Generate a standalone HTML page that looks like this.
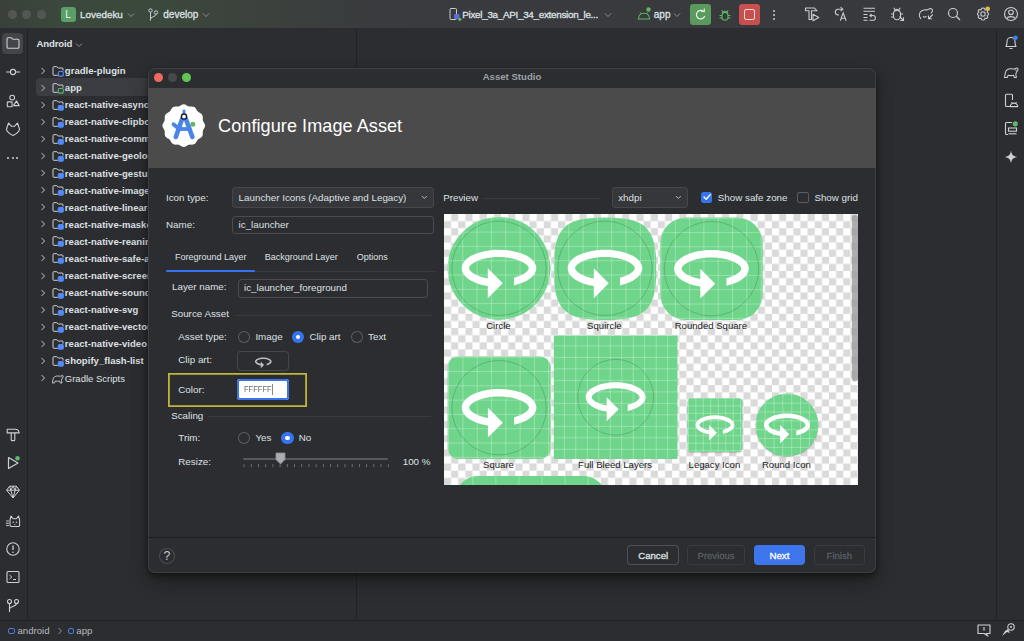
<!DOCTYPE html>
<html><head><meta charset="utf-8">
<style>
*{box-sizing:border-box;margin:0;padding:0}
html,body{width:1024px;height:641px;overflow:hidden;background:#2b2d30;font-family:"Liberation Sans",sans-serif;color:#dfe1e5;position:relative}
.a{position:absolute}
.t{position:absolute;white-space:nowrap;line-height:1}
svg{overflow:visible}
</style></head><body>
<div class="a" style="left:0.00px;top:0.00px;width:1024.00px;height:28.00px;background:linear-gradient(90deg,#394039 0px,#3b493c 70px,#3b483c 170px,#3c423d 240px,#393b3e 380px,#37393c 1024px)"></div>
<div class="a" style="left:0.00px;top:27.60px;width:1024.00px;height:1.00px;background:#2a2b2e"></div>
<div class="a" style="left:8.00px;top:9.80px;width:9.00px;height:9.00px;border-radius:50%;background:#535754"></div>
<div class="a" style="left:22.30px;top:9.80px;width:9.00px;height:9.00px;border-radius:50%;background:#535754"></div>
<div class="a" style="left:36.80px;top:9.80px;width:9.00px;height:9.00px;border-radius:50%;background:#535754"></div>
<div class="a" style="left:61.30px;top:6.80px;width:14.50px;height:15.00px;border-radius:3px;background:#5a9e68"></div>
<div class="t" style="left:65.20px;top:9.84px;font-size:10px;font-weight:normal;color:#f0f5f0;">L</div>
<div class="t" style="left:80.00px;top:10.12px;font-size:9.9px;font-weight:normal;color:#dfe1e5;-webkit-text-stroke:0.3px #dfe1e5">Lovedeku</div>
<svg class="a" style="left:126.50px;top:11.50px" width="8" height="6" viewBox="0 0 8 6"><path d="M1 1.5 L4 4.5 L7 1.5" fill="none" stroke="#8c8f94" stroke-width="1"/></svg>
<svg class="a" style="left:147.00px;top:8.00px" width="12" height="13" viewBox="0 0 12 13"><circle cx="3.5" cy="2.5" r="1.7" fill="none" stroke="#c9ccd1" stroke-width="1"/><circle cx="9" cy="4.5" r="1.7" fill="none" stroke="#c9ccd1" stroke-width="1"/><path d="M3.5 4.2 V12.5 M9 6.2 C9 9 3.5 8.5 3.5 11" fill="none" stroke="#c9ccd1" stroke-width="1"/></svg>
<div class="t" style="left:163.30px;top:10.04px;font-size:10px;font-weight:normal;color:#dfe1e5;-webkit-text-stroke:0.3px #dfe1e5">develop</div>
<svg class="a" style="left:202.00px;top:11.50px" width="8" height="6" viewBox="0 0 8 6"><path d="M1 1.5 L4 4.5 L7 1.5" fill="none" stroke="#8c8f94" stroke-width="1"/></svg>
<svg class="a" style="left:449.00px;top:8.00px" width="14" height="14" viewBox="0 0 14 14"><rect x="1" y="0.5" width="6.5" height="11" rx="1" fill="none" stroke="#c9ccd1" stroke-width="1"/><rect x="5" y="6" width="5.5" height="5" rx="1" fill="#5b6fd0"/><circle cx="10.8" cy="11.3" r="1.6" fill="#5fb865"/></svg>
<div class="t" style="left:462.30px;top:10.12px;font-size:9.9px;font-weight:normal;color:#dfe1e5;letter-spacing:-0.3px;-webkit-text-stroke:0.3px #dfe1e5">Pixel_3a_API_34_extension_le...</div>
<svg class="a" style="left:604.00px;top:11.50px" width="8" height="6" viewBox="0 0 8 6"><path d="M1 1.5 L4 4.5 L7 1.5" fill="none" stroke="#8c8f94" stroke-width="1"/></svg>
<svg class="a" style="left:637.00px;top:6.00px" width="14" height="15" viewBox="0 0 14 15"><path d="M1.5 13 C1.5 9.3 4 7.2 7 7.2 C10 7.2 12.5 9.3 12.5 13 Z" fill="none" stroke="#5fb865" stroke-width="1.1"/><path d="M3.2 6.3 L4.5 8 M10.8 6.3 L9.5 8" stroke="#5fb865" stroke-width="1"/><circle cx="11.5" cy="3.5" r="2.2" fill="#5fb865"/></svg>
<div class="t" style="left:653.80px;top:10.04px;font-size:10px;font-weight:normal;color:#dfe1e5;-webkit-text-stroke:0.3px #dfe1e5">app</div>
<svg class="a" style="left:673.00px;top:11.50px" width="8" height="6" viewBox="0 0 8 6"><path d="M1 1.5 L4 4.5 L7 1.5" fill="none" stroke="#8c8f94" stroke-width="1"/></svg>
<div class="a" style="left:690.30px;top:3.80px;width:21.20px;height:21.20px;border-radius:3px;background:#5a9a5c"></div>
<svg class="a" style="left:694.00px;top:8.00px" width="13" height="13" viewBox="0 0 13 13"><path d="M9.8 3.6 A4.3 4.3 0 1 0 10.8 8" fill="none" stroke="#e6f0e6" stroke-width="1.2"/><path d="M6.8 3.3 L10.3 3.6 L10.3 0.6" fill="none" stroke="#e6f0e6" stroke-width="1.1"/></svg>
<svg class="a" style="left:718.00px;top:7.50px" width="14" height="14" viewBox="0 0 14 14"><path d="M4 8 A3 3.6 0 0 1 10 8 V9 A3 3.2 0 0 1 4 9 Z" fill="none" stroke="#5fb865" stroke-width="1.1"/><path d="M4.3 5.3 A2.7 2 0 0 1 9.7 5.3" fill="none" stroke="#5fb865" stroke-width="1.1"/><path d="M5 3.8 L3.8 2 M9 3.8 L10.2 2 M4 7.5 H1.5 M10 7.5 H12.5 M4 10 H1.5 M10 10 H12.5" stroke="#5fb865" stroke-width="1"/></svg>
<div class="a" style="left:739.00px;top:3.80px;width:21.20px;height:21.20px;border-radius:3px;background:#c94f4f"></div>
<div class="a" style="left:744.20px;top:9.00px;width:10.80px;height:10.80px;border-radius:2px;border:1.2px solid #f5dede"></div>
<div class="a" style="left:772.50px;top:9.60px;width:2.00px;height:2.00px;border-radius:50%;background:#c9ccd1"></div>
<div class="a" style="left:772.50px;top:13.60px;width:2.00px;height:2.00px;border-radius:50%;background:#c9ccd1"></div>
<div class="a" style="left:772.50px;top:17.60px;width:2.00px;height:2.00px;border-radius:50%;background:#c9ccd1"></div>
<svg class="a" style="left:803.80px;top:6.30px" width="16" height="16" viewBox="0 0 16 16"><path d="M1.5 2 H10.5 L13 4.8 H7.5 V13.5 H5 V4.8 H1.5 Z" fill="none" stroke="#c9ccd1" stroke-width="1.1" stroke-linejoin="round"/><path d="M9 8.3 L14.8 11.5 L9 14.7 Z" fill="#37393c" stroke="#c9ccd1" stroke-width="1.1" stroke-linejoin="round"/></svg>
<svg class="a" style="left:832.50px;top:6.30px" width="16" height="16" viewBox="0 0 16 16"><path d="M9.5 3.2 H5.2 A2.9 2.9 0 0 0 5.2 9 H6" fill="none" stroke="#c9ccd1" stroke-width="1.1"/><path d="M7.6 1.2 L9.8 3.2 L7.6 5.2" fill="none" stroke="#c9ccd1" stroke-width="1.1"/><path d="M7.3 14.8 L10.2 6.8 L13.1 14.8 M8.3 12.2 H12.1" fill="none" stroke="#c9ccd1" stroke-width="1.1"/></svg>
<svg class="a" style="left:860.50px;top:6.30px" width="16" height="16" viewBox="0 0 16 16"><path d="M2.5 2.3 H14 M2.5 5.2 H14 M2.5 8.5 H6.5 M2.5 11.5 H6.5 M2.5 14.3 H6.5" fill="none" stroke="#c9ccd1" stroke-width="1.1"/><path d="M10.5 8 L9 9.5 L10.5 11 M9.2 9.5 H12 A2.4 2.4 0 0 1 12 14.3 H8.5" fill="none" stroke="#c9ccd1" stroke-width="1.1"/></svg>
<svg class="a" style="left:888.80px;top:6.30px" width="16" height="16" viewBox="0 0 16 16"><path d="M4.5 7.5 A3.5 3 0 0 1 11.5 7.5 V10 A3.5 3.8 0 0 1 4.5 10 Z M5.5 5.5 A2.5 2.3 0 0 1 10.5 5.5" fill="none" stroke="#c9ccd1" stroke-width="1.1"/><path d="M5.8 3.5 L4.8 1.8 M10.2 3.5 L11.2 1.8 M4.5 8 H2 M4.5 11 H2 M11.5 8 H14" stroke="#c9ccd1" stroke-width="1.1"/><path d="M10.5 10.5 L14.5 14.5 M14.5 11.3 V14.5 H11.3" fill="none" stroke="#c9ccd1" stroke-width="1.1"/></svg>
<svg class="a" style="left:917.50px;top:6.30px" width="16" height="16" viewBox="0 0 16 16"><path d="M1.5 10.5 C0.8 7.5 2.5 4.5 6 4 C8.5 3.7 9.5 4.3 10.8 3.2 C12 2.2 14.5 2.5 14.5 4.6 C14.5 6 13.3 6.8 12.8 7.2 M1.5 10.5 L3 13 M5 10.5 C6 11 7.5 11 8.5 10.5" fill="none" stroke="#c9ccd1" stroke-width="1.1" stroke-linejoin="round"/><path d="M14.8 8.5 L10.5 12.8 M10.5 9.5 V12.8 H13.8" fill="none" stroke="#c9ccd1" stroke-width="1.1"/></svg>
<svg class="a" style="left:946.30px;top:6.30px" width="16" height="16" viewBox="0 0 16 16"><circle cx="7" cy="7" r="4.5" fill="none" stroke="#c9ccd1" stroke-width="1.2"/><path d="M10.3 10.3 L14 14" stroke="#c9ccd1" stroke-width="1.3"/></svg>
<svg class="a" style="left:974.50px;top:6.30px" width="16" height="16" viewBox="0 0 16 16"><path d="M8 2 L9.5 2.3 L10 4 L11.8 3.5 L12.8 4.7 L12 6.2 L13.5 7.3 L13.5 8.7 L12 9.8 L12.8 11.3 L11.8 12.5 L10 12 L9.5 13.7 L8 14 L6.5 13.7 L6 12 L4.2 12.5 L3.2 11.3 L4 9.8 L2.5 8.7 L2.5 7.3 L4 6.2 L3.2 4.7 L4.2 3.5 L6 4 L6.5 2.3 Z" fill="none" stroke="#c9ccd1" stroke-width="1.05" stroke-linejoin="round"/><circle cx="8" cy="8" r="2.2" fill="none" stroke="#c9ccd1" stroke-width="1.05"/><circle cx="12.7" cy="2.7" r="2.3" fill="#e9b74a"/></svg>
<svg class="a" style="left:1003.00px;top:6.30px" width="16" height="16" viewBox="0 0 16 16"><circle cx="8" cy="8" r="6.5" fill="none" stroke="#c9ccd1" stroke-width="1.1"/><circle cx="8" cy="6.3" r="2.3" fill="none" stroke="#c9ccd1" stroke-width="1.1"/><path d="M3.8 12.6 C5 10 11 10 12.2 12.6" fill="none" stroke="#c9ccd1" stroke-width="1.1"/></svg>
<div class="a" style="left:27.00px;top:28.00px;width:1.00px;height:592.00px;background:#212225"></div>
<div class="a" style="left:356.00px;top:28.00px;width:1.00px;height:592.00px;background:#212225"></div>
<div class="a" style="left:996.00px;top:28.00px;width:1.00px;height:592.00px;background:#212225"></div>
<div class="a" style="left:0.00px;top:620.00px;width:1024.00px;height:1.00px;background:#212225"></div>
<div class="a" style="left:2.20px;top:32.60px;width:21.20px;height:21.60px;border-radius:4px;background:#43454a"></div>
<svg class="a" style="left:4.80px;top:35.40px" width="16" height="16" viewBox="0 0 16 16"><path d="M2 12 V4 A1.3 1.3 0 0 1 3.3 2.7 H6.3 L7.8 4.3 H12.7 A1.3 1.3 0 0 1 14 5.6 V12 A1.3 1.3 0 0 1 12.7 13.3 H3.3 A1.3 1.3 0 0 1 2 12 Z" fill="none" stroke="#ced0d6" stroke-width="1.1"/></svg>
<svg class="a" style="left:4.60px;top:64.00px" width="16" height="16" viewBox="0 0 16 16"><circle cx="8" cy="8" r="2.6" fill="none" stroke="#ced0d6" stroke-width="1.1"/><path d="M1 8 H5.4 M10.6 8 H15" stroke="#ced0d6" stroke-width="1.1"/></svg>
<svg class="a" style="left:4.80px;top:92.70px" width="16" height="16" viewBox="0 0 16 16"><circle cx="7.2" cy="4.6" r="2.4" fill="none" stroke="#ced0d6" stroke-width="1.1"/><rect x="2.3" y="8.9" width="4.8" height="4.8" rx="0.5" fill="none" stroke="#ced0d6" stroke-width="1.1"/><path d="M11.4 7.9 L14.2 12.6 H8.6 Z" fill="none" stroke="#ced0d6" stroke-width="1.1" stroke-linejoin="round"/></svg>
<svg class="a" style="left:4.80px;top:121.20px" width="16" height="16" viewBox="0 0 16 16"><path d="M3.5 2 L6.3 5.2 H9.7 L12.5 2 L14.5 8.2 C14.5 10.5 10.5 13.5 8 14.5 C5.5 13.5 1.5 10.5 1.5 8.2 Z" fill="none" stroke="#ced0d6" stroke-width="1.1" stroke-linejoin="round"/></svg>
<div class="a" style="left:7.30px;top:156.60px;width:2.00px;height:2.00px;border-radius:50%;background:#ced0d6"></div>
<div class="a" style="left:11.80px;top:156.60px;width:2.00px;height:2.00px;border-radius:50%;background:#ced0d6"></div>
<div class="a" style="left:16.30px;top:156.60px;width:2.00px;height:2.00px;border-radius:50%;background:#ced0d6"></div>
<svg class="a" style="left:4.80px;top:425.80px" width="16" height="16" viewBox="0 0 16 16"><path d="M2.2 3.2 H10.5 C12.3 3.2 13.8 4.6 14.2 6.9 H2.2 Z M6.2 6.9 V13.8 A0.8 0.8 0 0 0 7 14.6 H9 A0.8 0.8 0 0 0 9.8 13.8 V6.9" fill="none" stroke="#ced0d6" stroke-width="1.1" stroke-linejoin="round"/></svg>
<svg class="a" style="left:4.80px;top:455.10px" width="16" height="16" viewBox="0 0 16 16"><path d="M3.5 2.5 L13 8 L3.5 13.5 Z" fill="none" stroke="#ced0d6" stroke-width="1.2" stroke-linejoin="round"/><circle cx="12.5" cy="3.3" r="2.3" fill="#5fb865"/></svg>
<svg class="a" style="left:4.80px;top:483.60px" width="16" height="16" viewBox="0 0 16 16"><path d="M1.6 6.2 L4.6 2.2 H11.4 L14.4 6.2 L8 14 Z M1.6 6.2 H14.4 M5.8 6.2 L8 14 L10.2 6.2 M4.6 2.2 L5.8 6.2 L8 2.2 L10.2 6.2 L11.4 2.2" fill="none" stroke="#ced0d6" stroke-width="1" stroke-linejoin="round"/></svg>
<svg class="a" style="left:4.80px;top:512.70px" width="16" height="16" viewBox="0 0 16 16"><path d="M6 3 L8.2 5.8 H11.3 L13.5 3 L14.6 7 V12.2 A1.3 1.3 0 0 1 13.3 13.5 H6.3 A1.3 1.3 0 0 1 5 12.2 V7 Z" fill="none" stroke="#ced0d6" stroke-width="1.05" stroke-linejoin="round"/><path d="M1.2 8 H3.8 M0.8 10.3 H3.8 M1.2 12.6 H3.8" stroke="#ced0d6" stroke-width="1"/><circle cx="8.2" cy="9.2" r="0.75" fill="#ced0d6"/><circle cx="11.4" cy="9.2" r="0.75" fill="#ced0d6"/><path d="M9.2 11.2 L9.8 11.8 L10.4 11.2" fill="none" stroke="#ced0d6" stroke-width="0.8"/></svg>
<svg class="a" style="left:4.80px;top:541.30px" width="16" height="16" viewBox="0 0 16 16"><circle cx="8" cy="8" r="6.2" fill="none" stroke="#ced0d6" stroke-width="1.1"/><path d="M8 4.5 V9" stroke="#ced0d6" stroke-width="1.3"/><circle cx="8" cy="11.2" r="0.8" fill="#ced0d6"/></svg>
<svg class="a" style="left:4.80px;top:568.90px" width="16" height="16" viewBox="0 0 16 16"><rect x="2" y="2.5" width="12" height="11" rx="1" fill="none" stroke="#ced0d6" stroke-width="1.1"/><path d="M4.5 6 L6.8 8 L4.5 10 M8 10.5 H11" fill="none" stroke="#ced0d6" stroke-width="1"/></svg>
<svg class="a" style="left:4.80px;top:598.20px" width="16" height="16" viewBox="0 0 16 16"><circle cx="4.5" cy="3.5" r="2" fill="none" stroke="#ced0d6" stroke-width="1.1"/><circle cx="11.5" cy="3.5" r="2" fill="none" stroke="#ced0d6" stroke-width="1.1"/><path d="M4.5 5.5 V14 M11.5 5.5 C11.5 9 4.5 8 4.5 11" fill="none" stroke="#ced0d6" stroke-width="1.1"/></svg>
<svg class="a" style="left:1003.00px;top:35.00px" width="16" height="16" viewBox="0 0 16 16"><path d="M3 11.5 C4 10 4 8 4 6.5 A4 4 0 0 1 12 6.5 C12 8 12 10 13 11.5 Z M6.5 13.5 H9.5" fill="none" stroke="#ced0d6" stroke-width="1.1" stroke-linejoin="round"/><circle cx="12.5" cy="2.8" r="2.3" fill="#3d7ff0"/></svg>
<svg class="a" style="left:1003.00px;top:64.00px" width="16" height="16" viewBox="0 0 16 16"><path d="M1.5 13.5 L2.3 9 C2.7 6 5.5 4.5 8.5 4.7 C10.5 4.8 11.3 5.5 12.6 4.5 C13.6 3.7 15 3.8 15 5.5 C15 7 13.8 7.5 13.4 8 L12.8 10.5 L13.4 13.5 H11.3 L10.6 11.2 C8.9 11.7 6.6 11.7 5.2 11.2 L4.2 13.5 Z" fill="none" stroke="#ced0d6" stroke-width="1.05" stroke-linejoin="round"/><circle cx="13" cy="6.2" r="0.6" fill="#ced0d6"/></svg>
<svg class="a" style="left:1003.00px;top:92.30px" width="16" height="16" viewBox="0 0 16 16"><path d="M8.5 14.5 H3.5 A1 1 0 0 1 2.5 13.5 V3.3 A1 1 0 0 1 3.5 2.3 H8.5 A1 1 0 0 1 9.5 3.3 V8" fill="none" stroke="#ced0d6" stroke-width="1.1"/><path d="M7.3 14.6 A3.7 3.5 0 0 1 14.7 14.6 Z" fill="none" stroke="#ced0d6" stroke-width="1.1" stroke-linejoin="round"/><path d="M8.5 10 L9.3 11.3 M13.5 10 L12.7 11.3" stroke="#ced0d6" stroke-width="1"/></svg>
<svg class="a" style="left:1003.00px;top:120.40px" width="16" height="16" viewBox="0 0 16 16"><path d="M9 2.5 H3.5 A1 1 0 0 0 2.5 3.5 V13.5 A1 1 0 0 0 3.5 14.5 H5" fill="none" stroke="#ced0d6" stroke-width="1.1"/><rect x="5.5" y="8" width="8" height="3.2" fill="none" stroke="#ced0d6" stroke-width="1.1"/><path d="M5.5 13.8 H13.5" stroke="#ced0d6" stroke-width="1.1"/><circle cx="12.3" cy="3.8" r="2.6" fill="#5fb865"/></svg>
<svg class="a" style="left:1003.00px;top:149.00px" width="16" height="16" viewBox="0 0 16 16"><path d="M8 1.5 C8.6 5.8 10.2 7.4 14.5 8 C10.2 8.6 8.6 10.2 8 14.5 C7.4 10.2 5.8 8.6 1.5 8 C5.8 7.4 7.4 5.8 8 1.5 Z" fill="#ced0d6"/></svg>
<div class="a" style="left:8.20px;top:627.80px;width:6.40px;height:6.20px;border:1.5px solid #4d7fe0;border-radius:2px"></div>
<div class="t" style="left:17.50px;top:626.37px;font-size:9.6px;font-weight:normal;color:#b5b8bd;">android</div>
<svg class="a" style="left:56.50px;top:627.00px" width="6" height="8" viewBox="0 0 6 8"><path d="M1.5 1 L4.5 4 L1.5 7" fill="none" stroke="#8c8f94" stroke-width="1"/></svg>
<div class="a" style="left:67.60px;top:627.80px;width:6.40px;height:6.20px;border:1.5px solid #4d7fe0;border-radius:2px"></div>
<div class="t" style="left:76.30px;top:626.37px;font-size:9.6px;font-weight:normal;color:#b5b8bd;">app</div>
<svg class="a" style="left:976.00px;top:622.00px" width="16" height="16" viewBox="0 0 16 16"><path d="M2 3 H14 V11.5 H10 L12 14 L8 11.5 H2 Z" fill="none" stroke="#ced0d6" stroke-width="1.1" stroke-linejoin="round"/><path d="M8 5 V8.5" stroke="#ced0d6" stroke-width="1.2"/></svg>
<svg class="a" style="left:999.60px;top:622.00px" width="16" height="16" viewBox="0 0 16 16"><path d="M2 14 L5 9 L8 7 L10 11 L7 10 Z" fill="#ced0d6"/><circle cx="11" cy="5" r="3.2" fill="none" stroke="#ced0d6" stroke-width="1.1"/><circle cx="11" cy="5" r="1" fill="#ced0d6"/></svg>
<div class="t" style="left:36.50px;top:39.07px;font-size:9.6px;font-weight:bold;color:#dfe1e5;letter-spacing:-0.15px">Android</div>
<svg class="a" style="left:75.00px;top:42.00px" width="8" height="6" viewBox="0 0 8 6"><path d="M1 1.5 L4 4.5 L7 1.5" fill="none" stroke="#8c8f94" stroke-width="1"/></svg>
<div class="a" style="left:36.30px;top:78.40px;width:320.00px;height:17.20px;border-radius:4px;background:#3b3d42"></div>
<svg class="a" style="left:39.50px;top:66.50px" width="6" height="8" viewBox="0 0 6 8"><path d="M1.5 1 L4.5 4 L1.5 7" fill="none" stroke="#a0a3a8" stroke-width="1.05"/></svg>
<svg class="a" style="left:51.50px;top:64.50px" width="12" height="12" viewBox="0 0 12 12"><path d="M5.8 10.3 H1.8 A0.8 0.8 0 0 1 1 9.5 V2.5 A0.8 0.8 0 0 1 1.8 1.7 H4.8 L6.2 3 H10.2 A0.8 0.8 0 0 1 11 3.8 V5.6" fill="none" stroke="#ced0d6" stroke-width="1"/><rect x="6.3" y="6.5" width="5" height="4.6" rx="1" fill="none" stroke="#548af7" stroke-width="1.1"/></svg>
<div class="t" style="left:64.80px;top:65.96px;font-size:9.5px;font-weight:bold;color:#dfe1e5;letter-spacing:0.05px">gradle-plugin</div>
<svg class="a" style="left:39.50px;top:83.59px" width="6" height="8" viewBox="0 0 6 8"><path d="M1.5 1 L4.5 4 L1.5 7" fill="none" stroke="#a0a3a8" stroke-width="1.05"/></svg>
<svg class="a" style="left:51.50px;top:81.59px" width="12" height="12" viewBox="0 0 12 12"><path d="M5.8 10.3 H1.8 A0.8 0.8 0 0 1 1 9.5 V2.5 A0.8 0.8 0 0 1 1.8 1.7 H4.8 L6.2 3 H10.2 A0.8 0.8 0 0 1 11 3.8 V5.6" fill="none" stroke="#ced0d6" stroke-width="1"/><rect x="6.3" y="6.5" width="5" height="4.6" rx="1" fill="none" stroke="#5fb865" stroke-width="1.1"/></svg>
<div class="t" style="left:64.80px;top:83.05px;font-size:9.5px;font-weight:bold;color:#dfe1e5;letter-spacing:0.05px">app</div>
<svg class="a" style="left:39.50px;top:100.68px" width="6" height="8" viewBox="0 0 6 8"><path d="M1.5 1 L4.5 4 L1.5 7" fill="none" stroke="#a0a3a8" stroke-width="1.05"/></svg>
<svg class="a" style="left:51.50px;top:98.68px" width="12" height="12" viewBox="0 0 12 12"><path d="M5.8 10.3 H1.8 A0.8 0.8 0 0 1 1 9.5 V2.5 A0.8 0.8 0 0 1 1.8 1.7 H4.8 L6.2 3 H10.2 A0.8 0.8 0 0 1 11 3.8 V5.6" fill="none" stroke="#ced0d6" stroke-width="1"/><rect x="6.3" y="6.5" width="5" height="4.6" rx="1" fill="#548af7" stroke="#548af7" stroke-width="1.1"/></svg>
<div class="t" style="left:64.80px;top:100.14px;font-size:9.5px;font-weight:bold;color:#dfe1e5;letter-spacing:0.05px">react-native-async-storage</div>
<svg class="a" style="left:39.50px;top:117.77px" width="6" height="8" viewBox="0 0 6 8"><path d="M1.5 1 L4.5 4 L1.5 7" fill="none" stroke="#a0a3a8" stroke-width="1.05"/></svg>
<svg class="a" style="left:51.50px;top:115.77px" width="12" height="12" viewBox="0 0 12 12"><path d="M5.8 10.3 H1.8 A0.8 0.8 0 0 1 1 9.5 V2.5 A0.8 0.8 0 0 1 1.8 1.7 H4.8 L6.2 3 H10.2 A0.8 0.8 0 0 1 11 3.8 V5.6" fill="none" stroke="#ced0d6" stroke-width="1"/><rect x="6.3" y="6.5" width="5" height="4.6" rx="1" fill="#548af7" stroke="#548af7" stroke-width="1.1"/></svg>
<div class="t" style="left:64.80px;top:117.23px;font-size:9.5px;font-weight:bold;color:#dfe1e5;letter-spacing:0.05px">react-native-clipboard</div>
<svg class="a" style="left:39.50px;top:134.86px" width="6" height="8" viewBox="0 0 6 8"><path d="M1.5 1 L4.5 4 L1.5 7" fill="none" stroke="#a0a3a8" stroke-width="1.05"/></svg>
<svg class="a" style="left:51.50px;top:132.86px" width="12" height="12" viewBox="0 0 12 12"><path d="M5.8 10.3 H1.8 A0.8 0.8 0 0 1 1 9.5 V2.5 A0.8 0.8 0 0 1 1.8 1.7 H4.8 L6.2 3 H10.2 A0.8 0.8 0 0 1 11 3.8 V5.6" fill="none" stroke="#ced0d6" stroke-width="1"/><rect x="6.3" y="6.5" width="5" height="4.6" rx="1" fill="#548af7" stroke="#548af7" stroke-width="1.1"/></svg>
<div class="t" style="left:64.80px;top:134.32px;font-size:9.5px;font-weight:bold;color:#dfe1e5;letter-spacing:0.05px">react-native-community</div>
<svg class="a" style="left:39.50px;top:151.95px" width="6" height="8" viewBox="0 0 6 8"><path d="M1.5 1 L4.5 4 L1.5 7" fill="none" stroke="#a0a3a8" stroke-width="1.05"/></svg>
<svg class="a" style="left:51.50px;top:149.95px" width="12" height="12" viewBox="0 0 12 12"><path d="M5.8 10.3 H1.8 A0.8 0.8 0 0 1 1 9.5 V2.5 A0.8 0.8 0 0 1 1.8 1.7 H4.8 L6.2 3 H10.2 A0.8 0.8 0 0 1 11 3.8 V5.6" fill="none" stroke="#ced0d6" stroke-width="1"/><rect x="6.3" y="6.5" width="5" height="4.6" rx="1" fill="#548af7" stroke="#548af7" stroke-width="1.1"/></svg>
<div class="t" style="left:64.80px;top:151.41px;font-size:9.5px;font-weight:bold;color:#dfe1e5;letter-spacing:0.05px">react-native-geolocation</div>
<svg class="a" style="left:39.50px;top:169.04px" width="6" height="8" viewBox="0 0 6 8"><path d="M1.5 1 L4.5 4 L1.5 7" fill="none" stroke="#a0a3a8" stroke-width="1.05"/></svg>
<svg class="a" style="left:51.50px;top:167.04px" width="12" height="12" viewBox="0 0 12 12"><path d="M5.8 10.3 H1.8 A0.8 0.8 0 0 1 1 9.5 V2.5 A0.8 0.8 0 0 1 1.8 1.7 H4.8 L6.2 3 H10.2 A0.8 0.8 0 0 1 11 3.8 V5.6" fill="none" stroke="#ced0d6" stroke-width="1"/><rect x="6.3" y="6.5" width="5" height="4.6" rx="1" fill="#548af7" stroke="#548af7" stroke-width="1.1"/></svg>
<div class="t" style="left:64.80px;top:168.50px;font-size:9.5px;font-weight:bold;color:#dfe1e5;letter-spacing:0.05px">react-native-gesture-handler</div>
<svg class="a" style="left:39.50px;top:186.13px" width="6" height="8" viewBox="0 0 6 8"><path d="M1.5 1 L4.5 4 L1.5 7" fill="none" stroke="#a0a3a8" stroke-width="1.05"/></svg>
<svg class="a" style="left:51.50px;top:184.13px" width="12" height="12" viewBox="0 0 12 12"><path d="M5.8 10.3 H1.8 A0.8 0.8 0 0 1 1 9.5 V2.5 A0.8 0.8 0 0 1 1.8 1.7 H4.8 L6.2 3 H10.2 A0.8 0.8 0 0 1 11 3.8 V5.6" fill="none" stroke="#ced0d6" stroke-width="1"/><rect x="6.3" y="6.5" width="5" height="4.6" rx="1" fill="#548af7" stroke="#548af7" stroke-width="1.1"/></svg>
<div class="t" style="left:64.80px;top:185.59px;font-size:9.5px;font-weight:bold;color:#dfe1e5;letter-spacing:0.05px">react-native-image-picker</div>
<svg class="a" style="left:39.50px;top:203.22px" width="6" height="8" viewBox="0 0 6 8"><path d="M1.5 1 L4.5 4 L1.5 7" fill="none" stroke="#a0a3a8" stroke-width="1.05"/></svg>
<svg class="a" style="left:51.50px;top:201.22px" width="12" height="12" viewBox="0 0 12 12"><path d="M5.8 10.3 H1.8 A0.8 0.8 0 0 1 1 9.5 V2.5 A0.8 0.8 0 0 1 1.8 1.7 H4.8 L6.2 3 H10.2 A0.8 0.8 0 0 1 11 3.8 V5.6" fill="none" stroke="#ced0d6" stroke-width="1"/><rect x="6.3" y="6.5" width="5" height="4.6" rx="1" fill="#548af7" stroke="#548af7" stroke-width="1.1"/></svg>
<div class="t" style="left:64.80px;top:202.68px;font-size:9.5px;font-weight:bold;color:#dfe1e5;letter-spacing:0.05px">react-native-linear-gradient</div>
<svg class="a" style="left:39.50px;top:220.31px" width="6" height="8" viewBox="0 0 6 8"><path d="M1.5 1 L4.5 4 L1.5 7" fill="none" stroke="#a0a3a8" stroke-width="1.05"/></svg>
<svg class="a" style="left:51.50px;top:218.31px" width="12" height="12" viewBox="0 0 12 12"><path d="M5.8 10.3 H1.8 A0.8 0.8 0 0 1 1 9.5 V2.5 A0.8 0.8 0 0 1 1.8 1.7 H4.8 L6.2 3 H10.2 A0.8 0.8 0 0 1 11 3.8 V5.6" fill="none" stroke="#ced0d6" stroke-width="1"/><rect x="6.3" y="6.5" width="5" height="4.6" rx="1" fill="#548af7" stroke="#548af7" stroke-width="1.1"/></svg>
<div class="t" style="left:64.80px;top:219.77px;font-size:9.5px;font-weight:bold;color:#dfe1e5;letter-spacing:0.05px">react-native-masked-view</div>
<svg class="a" style="left:39.50px;top:237.40px" width="6" height="8" viewBox="0 0 6 8"><path d="M1.5 1 L4.5 4 L1.5 7" fill="none" stroke="#a0a3a8" stroke-width="1.05"/></svg>
<svg class="a" style="left:51.50px;top:235.40px" width="12" height="12" viewBox="0 0 12 12"><path d="M5.8 10.3 H1.8 A0.8 0.8 0 0 1 1 9.5 V2.5 A0.8 0.8 0 0 1 1.8 1.7 H4.8 L6.2 3 H10.2 A0.8 0.8 0 0 1 11 3.8 V5.6" fill="none" stroke="#ced0d6" stroke-width="1"/><rect x="6.3" y="6.5" width="5" height="4.6" rx="1" fill="#548af7" stroke="#548af7" stroke-width="1.1"/></svg>
<div class="t" style="left:64.80px;top:236.86px;font-size:9.5px;font-weight:bold;color:#dfe1e5;letter-spacing:0.05px">react-native-reanimated</div>
<svg class="a" style="left:39.50px;top:254.49px" width="6" height="8" viewBox="0 0 6 8"><path d="M1.5 1 L4.5 4 L1.5 7" fill="none" stroke="#a0a3a8" stroke-width="1.05"/></svg>
<svg class="a" style="left:51.50px;top:252.49px" width="12" height="12" viewBox="0 0 12 12"><path d="M5.8 10.3 H1.8 A0.8 0.8 0 0 1 1 9.5 V2.5 A0.8 0.8 0 0 1 1.8 1.7 H4.8 L6.2 3 H10.2 A0.8 0.8 0 0 1 11 3.8 V5.6" fill="none" stroke="#ced0d6" stroke-width="1"/><rect x="6.3" y="6.5" width="5" height="4.6" rx="1" fill="#548af7" stroke="#548af7" stroke-width="1.1"/></svg>
<div class="t" style="left:64.80px;top:253.95px;font-size:9.5px;font-weight:bold;color:#dfe1e5;letter-spacing:0.05px">react-native-safe-area-context</div>
<svg class="a" style="left:39.50px;top:271.58px" width="6" height="8" viewBox="0 0 6 8"><path d="M1.5 1 L4.5 4 L1.5 7" fill="none" stroke="#a0a3a8" stroke-width="1.05"/></svg>
<svg class="a" style="left:51.50px;top:269.58px" width="12" height="12" viewBox="0 0 12 12"><path d="M5.8 10.3 H1.8 A0.8 0.8 0 0 1 1 9.5 V2.5 A0.8 0.8 0 0 1 1.8 1.7 H4.8 L6.2 3 H10.2 A0.8 0.8 0 0 1 11 3.8 V5.6" fill="none" stroke="#ced0d6" stroke-width="1"/><rect x="6.3" y="6.5" width="5" height="4.6" rx="1" fill="#548af7" stroke="#548af7" stroke-width="1.1"/></svg>
<div class="t" style="left:64.80px;top:271.04px;font-size:9.5px;font-weight:bold;color:#dfe1e5;letter-spacing:0.05px">react-native-screens</div>
<svg class="a" style="left:39.50px;top:288.67px" width="6" height="8" viewBox="0 0 6 8"><path d="M1.5 1 L4.5 4 L1.5 7" fill="none" stroke="#a0a3a8" stroke-width="1.05"/></svg>
<svg class="a" style="left:51.50px;top:286.67px" width="12" height="12" viewBox="0 0 12 12"><path d="M5.8 10.3 H1.8 A0.8 0.8 0 0 1 1 9.5 V2.5 A0.8 0.8 0 0 1 1.8 1.7 H4.8 L6.2 3 H10.2 A0.8 0.8 0 0 1 11 3.8 V5.6" fill="none" stroke="#ced0d6" stroke-width="1"/><rect x="6.3" y="6.5" width="5" height="4.6" rx="1" fill="#548af7" stroke="#548af7" stroke-width="1.1"/></svg>
<div class="t" style="left:64.80px;top:288.13px;font-size:9.5px;font-weight:bold;color:#dfe1e5;letter-spacing:0.05px">react-native-sound</div>
<svg class="a" style="left:39.50px;top:305.76px" width="6" height="8" viewBox="0 0 6 8"><path d="M1.5 1 L4.5 4 L1.5 7" fill="none" stroke="#a0a3a8" stroke-width="1.05"/></svg>
<svg class="a" style="left:51.50px;top:303.76px" width="12" height="12" viewBox="0 0 12 12"><path d="M5.8 10.3 H1.8 A0.8 0.8 0 0 1 1 9.5 V2.5 A0.8 0.8 0 0 1 1.8 1.7 H4.8 L6.2 3 H10.2 A0.8 0.8 0 0 1 11 3.8 V5.6" fill="none" stroke="#ced0d6" stroke-width="1"/><rect x="6.3" y="6.5" width="5" height="4.6" rx="1" fill="#548af7" stroke="#548af7" stroke-width="1.1"/></svg>
<div class="t" style="left:64.80px;top:305.22px;font-size:9.5px;font-weight:bold;color:#dfe1e5;letter-spacing:0.05px">react-native-svg</div>
<svg class="a" style="left:39.50px;top:322.85px" width="6" height="8" viewBox="0 0 6 8"><path d="M1.5 1 L4.5 4 L1.5 7" fill="none" stroke="#a0a3a8" stroke-width="1.05"/></svg>
<svg class="a" style="left:51.50px;top:320.85px" width="12" height="12" viewBox="0 0 12 12"><path d="M5.8 10.3 H1.8 A0.8 0.8 0 0 1 1 9.5 V2.5 A0.8 0.8 0 0 1 1.8 1.7 H4.8 L6.2 3 H10.2 A0.8 0.8 0 0 1 11 3.8 V5.6" fill="none" stroke="#ced0d6" stroke-width="1"/><rect x="6.3" y="6.5" width="5" height="4.6" rx="1" fill="#548af7" stroke="#548af7" stroke-width="1.1"/></svg>
<div class="t" style="left:64.80px;top:322.31px;font-size:9.5px;font-weight:bold;color:#dfe1e5;letter-spacing:0.05px">react-native-vector-icons</div>
<svg class="a" style="left:39.50px;top:339.94px" width="6" height="8" viewBox="0 0 6 8"><path d="M1.5 1 L4.5 4 L1.5 7" fill="none" stroke="#a0a3a8" stroke-width="1.05"/></svg>
<svg class="a" style="left:51.50px;top:337.94px" width="12" height="12" viewBox="0 0 12 12"><path d="M5.8 10.3 H1.8 A0.8 0.8 0 0 1 1 9.5 V2.5 A0.8 0.8 0 0 1 1.8 1.7 H4.8 L6.2 3 H10.2 A0.8 0.8 0 0 1 11 3.8 V5.6" fill="none" stroke="#ced0d6" stroke-width="1"/><rect x="6.3" y="6.5" width="5" height="4.6" rx="1" fill="#548af7" stroke="#548af7" stroke-width="1.1"/></svg>
<div class="t" style="left:64.80px;top:339.40px;font-size:9.5px;font-weight:bold;color:#dfe1e5;letter-spacing:0.05px">react-native-video</div>
<svg class="a" style="left:39.50px;top:357.03px" width="6" height="8" viewBox="0 0 6 8"><path d="M1.5 1 L4.5 4 L1.5 7" fill="none" stroke="#a0a3a8" stroke-width="1.05"/></svg>
<svg class="a" style="left:51.50px;top:355.03px" width="12" height="12" viewBox="0 0 12 12"><path d="M5.8 10.3 H1.8 A0.8 0.8 0 0 1 1 9.5 V2.5 A0.8 0.8 0 0 1 1.8 1.7 H4.8 L6.2 3 H10.2 A0.8 0.8 0 0 1 11 3.8 V5.6" fill="none" stroke="#ced0d6" stroke-width="1"/><rect x="6.3" y="6.5" width="5" height="4.6" rx="1" fill="#548af7" stroke="#548af7" stroke-width="1.1"/></svg>
<div class="t" style="left:64.80px;top:356.49px;font-size:9.5px;font-weight:bold;color:#dfe1e5;letter-spacing:0.05px">shopify_flash-list</div>
<svg class="a" style="left:39.50px;top:374.12px" width="6" height="8" viewBox="0 0 6 8"><path d="M1.5 1 L4.5 4 L1.5 7" fill="none" stroke="#a0a3a8" stroke-width="1.05"/></svg>
<svg class="a" style="left:51.00px;top:371.62px" width="13" height="13" viewBox="0 0 13 13"><path d="M1.3 11 L2 7.5 C2.3 5 4.5 3.8 7 4 C8.5 4.1 9.3 4.6 10.3 3.8 C11 3.2 12.3 3.2 12.3 4.5 C12.3 5.6 11.3 6 11 6.3 L10.5 8.5 L11 11 H9.3 L8.7 9 C7.3 9.4 5.5 9.4 4.3 9 L3.5 11 Z" fill="none" stroke="#ced0d6" stroke-width="0.9" stroke-linejoin="round"/><circle cx="10.8" cy="4.8" r="0.5" fill="#ced0d6"/></svg>
<div class="t" style="left:64.80px;top:373.58px;font-size:9.5px;font-weight:normal;color:#dfe1e5;">Gradle Scripts</div>
<div class="a" style="left:148.40px;top:68.00px;width:727.60px;height:505.00px;border-radius:7px;background:#2b2d30;box-shadow:inset 0 0 0 1px #3d3f43,0 3px 5px 0px rgba(0,0,0,0.4),0 8px 20px 0px rgba(0,0,0,0.35);overflow:hidden"></div>
<div class="a" style="left:148.40px;top:87.80px;width:727.60px;height:80.20px;background:#4b4b4c"></div>
<div class="a" style="left:154.00px;top:73.20px;width:8.80px;height:8.80px;border-radius:50%;background:#ec6a5e"></div>
<div class="a" style="left:168.20px;top:73.20px;width:8.80px;height:8.80px;border-radius:50%;background:#48494b"></div>
<div class="a" style="left:182.40px;top:73.20px;width:8.80px;height:8.80px;border-radius:50%;background:#61c554"></div>
<div class="t" style="left:362.00px;width:300px;text-align:center;top:72.37px;font-size:9.6px;font-weight:bold;color:#9fa2a7;">Asset Studio</div>
<svg class="a" style="left:160.00px;top:100.00px" width="48" height="48" viewBox="0 0 48 48"><polygon points="45.10,25.60 44.84,26.98 44.17,28.29 43.43,29.52 42.92,30.74 42.75,32.05 42.78,33.48 42.70,34.95 42.24,36.28 41.32,37.34 40.09,38.14 38.84,38.83 37.79,39.64 36.98,40.69 36.29,41.94 35.49,43.17 34.43,44.09 33.10,44.55 31.63,44.63 30.20,44.60 28.89,44.77 27.67,45.28 26.44,46.02 25.13,46.69 23.75,46.95 22.37,46.69 21.06,46.02 19.83,45.28 18.61,44.77 17.30,44.60 15.87,44.63 14.40,44.55 13.08,44.09 12.01,43.17 11.21,41.94 10.52,40.69 9.71,39.64 8.66,38.83 7.41,38.14 6.18,37.34 5.26,36.28 4.80,34.95 4.72,33.48 4.75,32.05 4.58,30.74 4.07,29.52 3.33,28.29 2.66,26.98 2.40,25.60 2.66,24.22 3.33,22.91 4.07,21.68 4.58,20.46 4.75,19.15 4.72,17.72 4.80,16.25 5.26,14.92 6.18,13.86 7.41,13.06 8.66,12.37 9.71,11.56 10.52,10.51 11.21,9.26 12.01,8.03 13.07,7.11 14.40,6.65 15.87,6.57 17.30,6.60 18.61,6.43 19.83,5.92 21.06,5.18 22.37,4.51 23.75,4.25 25.13,4.51 26.44,5.18 27.67,5.92 28.89,6.43 30.20,6.60 31.63,6.57 33.10,6.65 34.43,7.11 35.49,8.03 36.29,9.26 36.98,10.51 37.79,11.56 38.84,12.37 40.09,13.06 41.32,13.86 42.24,14.92 42.70,16.25 42.78,17.72 42.75,19.15 42.92,20.46 43.43,21.68 44.17,22.91 44.84,24.22" fill="#ffffff"/><path d="M22.3 18.5 L15.8 37" stroke="#4a84e8" stroke-width="4.6" stroke-linecap="round"/><path d="M25.7 18.5 L32.4 37" stroke="#4a84e8" stroke-width="4.6" stroke-linecap="round"/><path d="M18 29 H30" stroke="#4a84e8" stroke-width="3.8"/><path d="M13.5 24.3 L19 29" stroke="#4a84e8" stroke-width="3.8" stroke-linecap="round"/><path d="M24 10.8 V14" stroke="#4a84e8" stroke-width="2.8" stroke-linecap="round"/><circle cx="24" cy="16.6" r="2.6" fill="#fff" stroke="#1f1f1f" stroke-width="1.4"/><circle cx="32.8" cy="24.3" r="2.5" fill="#5fb865"/></svg>
<div class="t" style="left:218.10px;top:116.58px;font-size:18.1px;font-weight:normal;color:#ffffff;letter-spacing:0.05px">Configure Image Asset</div>
<div class="t" style="left:166.00px;top:192.70px;font-size:9.8px;font-weight:normal;color:#dfe1e5;">Icon type:</div>
<div class="a" style="left:232.20px;top:187.20px;width:202.10px;height:20.60px;border-radius:4px;background:#35373b;box-shadow:inset 0 0 0 1px #45474b"></div>
<div class="t" style="left:238.60px;top:192.70px;font-size:9.8px;font-weight:normal;color:#dfe1e5;">Launcher Icons (Adaptive and Legacy)</div>
<svg class="a" style="left:421.00px;top:195.20px" width="7" height="5" viewBox="0 0 7 5"><path d="M0.8 1 L3.3 3.5 L5.8 1" fill="none" stroke="#b4b7bc" stroke-width="1"/></svg>
<div class="t" style="left:166.00px;top:219.90px;font-size:9.8px;font-weight:normal;color:#dfe1e5;">Name:</div>
<div class="a" style="left:232.20px;top:215.70px;width:201.80px;height:18.80px;border-radius:4px;background:#2b2d30;box-shadow:inset 0 0 0 1px #494b50"></div>
<div class="t" style="left:238.60px;top:220.20px;font-size:9.8px;font-weight:normal;color:#dfe1e5;">ic_launcher</div>
<div class="t" style="left:174.90px;top:253.08px;font-size:9px;font-weight:normal;color:#dfe1e5;">Foreground Layer</div>
<div class="t" style="left:264.70px;top:253.08px;font-size:9px;font-weight:normal;color:#dfe1e5;">Background Layer</div>
<div class="t" style="left:356.80px;top:253.08px;font-size:9px;font-weight:normal;color:#dfe1e5;">Options</div>
<div class="a" style="left:165.60px;top:271.00px;width:269.00px;height:1.00px;background:#393b40"></div>
<div class="a" style="left:165.60px;top:270.00px;width:89.80px;height:2.20px;background:#3574f0;border-radius:1px"></div>
<div class="t" style="left:172.00px;top:282.20px;font-size:9.8px;font-weight:normal;color:#dfe1e5;">Layer name:</div>
<div class="a" style="left:237.80px;top:278.60px;width:190.70px;height:19.00px;border-radius:4px;background:#2b2d30;box-shadow:inset 0 0 0 1px #494b50"></div>
<div class="t" style="left:244.00px;top:282.70px;font-size:9.8px;font-weight:normal;color:#dfe1e5;">ic_launcher_foreground</div>
<div class="t" style="left:171.20px;top:309.30px;font-size:9.8px;font-weight:normal;color:#dfe1e5;">Source Asset</div>
<div class="a" style="left:235.00px;top:315.00px;width:195.50px;height:1.00px;background:#393b40"></div>
<div class="t" style="left:178.30px;top:331.90px;font-size:9.8px;font-weight:normal;color:#dfe1e5;">Asset type:</div>
<div class="a" style="left:237.70px;top:330.50px;width:12.60px;height:12.60px;border-radius:50%;box-shadow:inset 0 0 0 1px #5a5d63"></div>
<div class="t" style="left:255.40px;top:331.90px;font-size:9.8px;font-weight:normal;color:#dfe1e5;">Image</div>
<div class="a" style="left:291.60px;top:330.50px;width:12.60px;height:12.60px;border-radius:50%;background:#3574f0"></div>
<div class="a" style="left:295.70px;top:334.60px;width:4.40px;height:4.40px;border-radius:50%;background:#ffffff"></div>
<div class="t" style="left:309.50px;top:331.90px;font-size:9.8px;font-weight:normal;color:#dfe1e5;">Clip art</div>
<div class="a" style="left:350.50px;top:330.50px;width:12.60px;height:12.60px;border-radius:50%;box-shadow:inset 0 0 0 1px #5a5d63"></div>
<div class="t" style="left:368.10px;top:331.90px;font-size:9.8px;font-weight:normal;color:#dfe1e5;">Text</div>
<div class="t" style="left:178.30px;top:355.40px;font-size:9.8px;font-weight:normal;color:#dfe1e5;">Clip art:</div>
<div class="a" style="left:237.30px;top:351.10px;width:51.50px;height:19.80px;border-radius:4px;box-shadow:inset 0 0 0 1px #45474c"></div>
<svg class="a" style="left:254.00px;top:355.60px" width="18" height="13" viewBox="0 0 18 13"><path d="M12 7C6.48 7 2 9.24 2 12c0 2.24 2.94 4.13 7 4.77V20l4-4-4-4v2.73c-3.15-.56-5-1.9-5-2.73 0-1.06 3.04-3 8-3s8 1.94 8 3c0 .73-1.46 1.89-4 2.53v2.05c3.53-.77 6-2.53 6-4.58 0-2.76-4.48-5-10-5z" transform="translate(-0.8,-4.5) scale(0.84)" fill="#b9bcc1"/></svg>
<div class="a" style="left:168.40px;top:373.40px;width:138.30px;height:33.80px;box-shadow:inset 0 0 0 1.8px #bdb63a"></div>
<div class="t" style="left:178.30px;top:384.70px;font-size:9.8px;font-weight:normal;color:#dfe1e5;">Color:</div>
<div class="a" style="left:237.30px;top:379.30px;width:51.50px;height:20.40px;border-radius:3px;background:#ffffff;box-shadow:inset 0 0 0 2px #3b74e6"></div>
<div class="t" style="left:244.20px;top:385.18px;font-size:9px;font-weight:normal;color:#6a6a6a;transform:scaleX(0.84);transform-origin:0 0">FFFFFF</div>
<div class="a" style="left:272.20px;top:384.30px;width:0.70px;height:10.50px;background:#888"></div>
<div class="t" style="left:171.20px;top:410.70px;font-size:9.8px;font-weight:normal;color:#dfe1e5;">Scaling</div>
<div class="a" style="left:208.00px;top:416.00px;width:222.50px;height:1.00px;background:#393b40"></div>
<div class="t" style="left:178.30px;top:433.30px;font-size:9.8px;font-weight:normal;color:#dfe1e5;">Trim:</div>
<div class="a" style="left:237.70px;top:431.90px;width:12.60px;height:12.60px;border-radius:50%;box-shadow:inset 0 0 0 1px #5a5d63"></div>
<div class="t" style="left:255.40px;top:433.30px;font-size:9.8px;font-weight:normal;color:#dfe1e5;">Yes</div>
<div class="a" style="left:281.10px;top:431.90px;width:12.60px;height:12.60px;border-radius:50%;background:#3574f0"></div>
<div class="a" style="left:285.20px;top:436.00px;width:4.40px;height:4.40px;border-radius:50%;background:#ffffff"></div>
<div class="t" style="left:298.70px;top:433.30px;font-size:9.8px;font-weight:normal;color:#dfe1e5;">No</div>
<div class="t" style="left:178.30px;top:456.70px;font-size:9.8px;font-weight:normal;color:#dfe1e5;">Resize:</div>
<div class="a" style="left:243.30px;top:457.70px;width:144.60px;height:2.10px;border-radius:1px;background:#55585e"></div>
<svg class="a" style="left:243.00px;top:463.90px" width="146" height="4" viewBox="0 0 146 4"><rect x="0.60" y="0" width="0.9" height="3.2" fill="#6f737a"/><rect x="7.81" y="0" width="0.9" height="3.2" fill="#6f737a"/><rect x="15.02" y="0" width="0.9" height="3.2" fill="#6f737a"/><rect x="22.23" y="0" width="0.9" height="3.2" fill="#6f737a"/><rect x="29.44" y="0" width="0.9" height="3.2" fill="#6f737a"/><rect x="36.65" y="0" width="0.9" height="3.2" fill="#6f737a"/><rect x="43.86" y="0" width="0.9" height="3.2" fill="#6f737a"/><rect x="51.07" y="0" width="0.9" height="3.2" fill="#6f737a"/><rect x="58.28" y="0" width="0.9" height="3.2" fill="#6f737a"/><rect x="65.49" y="0" width="0.9" height="3.2" fill="#6f737a"/><rect x="72.70" y="0" width="0.9" height="3.2" fill="#6f737a"/><rect x="79.91" y="0" width="0.9" height="3.2" fill="#6f737a"/><rect x="87.12" y="0" width="0.9" height="3.2" fill="#6f737a"/><rect x="94.33" y="0" width="0.9" height="3.2" fill="#6f737a"/><rect x="101.54" y="0" width="0.9" height="3.2" fill="#6f737a"/><rect x="108.75" y="0" width="0.9" height="3.2" fill="#6f737a"/><rect x="115.96" y="0" width="0.9" height="3.2" fill="#6f737a"/><rect x="123.17" y="0" width="0.9" height="3.2" fill="#6f737a"/><rect x="130.38" y="0" width="0.9" height="3.2" fill="#6f737a"/><rect x="137.59" y="0" width="0.9" height="3.2" fill="#6f737a"/><rect x="144.80" y="0" width="0.9" height="3.2" fill="#6f737a"/></svg>
<svg class="a" style="left:274.60px;top:452.20px" width="11" height="13" viewBox="0 0 11 13"><path d="M1 1 H10 V7.5 L5.5 12 L1 7.5 Z" fill="#a9acb2" stroke="#8d9096" stroke-width="0.8"/></svg>
<div class="t" style="left:130.50px;width:300px;text-align:right;top:456.90px;font-size:9.8px;font-weight:normal;color:#dfe1e5;">100 %</div>
<div class="t" style="left:443.20px;top:192.90px;font-size:9.8px;font-weight:normal;color:#dfe1e5;">Preview</div>
<div class="a" style="left:482.60px;top:198.00px;width:118.70px;height:1.00px;background:#393b40"></div>
<div class="a" style="left:611.90px;top:187.30px;width:76.00px;height:20.30px;border-radius:4px;background:#35373b;box-shadow:inset 0 0 0 1px #45474b"></div>
<div class="t" style="left:618.20px;top:192.90px;font-size:9.8px;font-weight:normal;color:#dfe1e5;">xhdpi</div>
<svg class="a" style="left:674.60px;top:195.20px" width="7" height="5" viewBox="0 0 7 5"><path d="M0.8 1 L3.3 3.5 L5.8 1" fill="none" stroke="#b4b7bc" stroke-width="1"/></svg>
<div class="a" style="left:700.80px;top:191.50px;width:11.60px;height:11.40px;border-radius:2.5px;background:#3574f0"></div>
<svg class="a" style="left:700.60px;top:191.30px" width="12" height="12" viewBox="0 0 12 12"><path d="M3 6 L5.2 8.3 L9.3 3.6" fill="none" stroke="#fff" stroke-width="1.4" stroke-linecap="round" stroke-linejoin="round"/></svg>
<div class="t" style="left:717.80px;top:192.90px;font-size:9.8px;font-weight:normal;color:#dfe1e5;">Show safe zone</div>
<div class="a" style="left:797.40px;top:191.50px;width:11.60px;height:11.40px;border-radius:2.5px;box-shadow:inset 0 0 0 1px #5a5d63"></div>
<div class="t" style="left:814.40px;top:192.90px;font-size:9.8px;font-weight:normal;color:#dfe1e5;">Show grid</div>
<div class="a" style="left:148.40px;top:537.20px;width:727.60px;height:1.00px;background:#1e1f22"></div>
<div class="a" style="left:158.80px;top:547.60px;width:16.00px;height:16.00px;border-radius:50%;box-shadow:inset 0 0 0 1px #4a4c51"></div>
<div class="t" style="left:16.90px;width:300px;text-align:center;top:549.89px;font-size:12.3px;font-weight:normal;color:#c9ccd1;">?</div>
<div class="a" style="left:627.30px;top:545.40px;width:51.80px;height:20.00px;border-radius:4px;box-shadow:inset 0 0 0 1px #4e5157"></div>
<div class="t" style="left:503.20px;width:300px;text-align:center;top:551.07px;font-size:9.6px;font-weight:normal;color:#dfe1e5;-webkit-text-stroke:0.3px #dfe1e5">Cancel</div>
<div class="a" style="left:687.10px;top:545.40px;width:57.90px;height:20.00px;border-radius:4px;box-shadow:inset 0 0 0 1px #393b40"></div>
<div class="t" style="left:566.05px;width:300px;text-align:center;top:551.16px;font-size:9.5px;font-weight:normal;color:#5a5d63;-webkit-text-stroke:0.3px #5a5d63">Previous</div>
<div class="a" style="left:753.80px;top:545.40px;width:51.30px;height:20.00px;border-radius:4px;background:#3d76ec"></div>
<div class="t" style="left:629.45px;width:300px;text-align:center;top:550.99px;font-size:9.7px;font-weight:normal;color:#ffffff;-webkit-text-stroke:0.3px #ffffff">Next</div>
<div class="a" style="left:813.60px;top:545.40px;width:51.30px;height:20.00px;border-radius:4px;box-shadow:inset 0 0 0 1px #393b40"></div>
<div class="t" style="left:689.25px;width:300px;text-align:center;top:551.16px;font-size:9.5px;font-weight:normal;color:#5a5d63;-webkit-text-stroke:0.3px #5a5d63">Finish</div>
<svg class="a" style="left:443.5px;top:214px;overflow:hidden" width="414.6" height="271" viewBox="443.5 214 414.6 271"><defs><path id="g360" d="M12 7C6.48 7 2 9.24 2 12c0 2.24 2.94 4.13 7 4.77V20l4-4-4-4v2.73c-3.15-.56-5-1.9-5-2.73 0-1.06 3.04-3 8-3s8 1.94 8 3c0 .73-1.46 1.89-4 2.53v2.05c3.53-.77 6-2.53 6-4.58 0-2.76-4.48-5-10-5z" transform="translate(-2,-7)"/><pattern id="chk" x="443.5" y="214" width="14.26" height="14.26" patternUnits="userSpaceOnUse"><rect width="14.26" height="14.26" fill="#ffffff"/><rect x="7.13" y="0" width="7.13" height="7.13" fill="#dadada"/><rect x="0" y="7.13" width="7.13" height="7.13" fill="#dadada"/></pattern><filter id="sh" x="-20%" y="-20%" width="140%" height="150%"><feDropShadow dx="0" dy="1" stdDeviation="1" flood-color="#000" flood-opacity="0.3"/></filter><clipPath id="c1"><circle cx="498.5" cy="268.3" r="51.4"/></clipPath><clipPath id="c2"><path d="M604.55,217.50 C563.47,217.50 553.20,227.77 553.20,268.85 C553.20,309.93 563.47,320.20 604.55,320.20 C645.63,320.20 655.90,309.93 655.90,268.85 C655.90,227.77 645.63,217.50 604.55,217.50 Z"/></clipPath><clipPath id="c3"><rect x="659.7" y="217.5" width="102.5" height="102.5" rx="26"/></clipPath><clipPath id="c4"><rect x="447.1" y="356.4" width="103" height="102.6" rx="11"/></clipPath><clipPath id="c5"><rect x="553.1" y="335.5" width="124.1" height="123.5"/></clipPath><clipPath id="c6"><rect x="455.7" y="476.1" width="149.2" height="149.2" rx="21"/></clipPath><clipPath id="c7"><rect x="687.2" y="397.9" width="54.6" height="54.2" rx="4"/></clipPath><clipPath id="c8"><circle cx="786.5" cy="425" r="31.4"/></clipPath></defs><rect x="443.5" y="214" width="414.6" height="271" fill="url(#chk)"/><g clip-path="url(#c1)"><rect x="421.25" y="191.05" width="154.50" height="154.50" fill="#6ed58b"/><path d="M433.70 191.05V345.55M421.25 203.50H575.75M448.00 191.05V345.55M421.25 217.80H575.75M462.31 191.05V345.55M421.25 232.11H575.75M476.61 191.05V345.55M421.25 246.41H575.75M490.92 191.05V345.55M421.25 260.72H575.75M505.22 191.05V345.55M421.25 275.02H575.75M519.53 191.05V345.55M421.25 289.33H575.75M533.83 191.05V345.55M421.25 303.63H575.75M548.14 191.05V345.55M421.25 317.94H575.75M562.45 191.05V345.55M421.25 332.25H575.75" stroke="#ffffff" stroke-opacity="0.33" stroke-width="0.9" fill="none"/><circle cx="498.50" cy="268.30" r="47.21" fill="none" stroke="#1a3a24" stroke-opacity="0.38" stroke-width="0.55"/><g transform="translate(453.69,223.50) scale(3.7338)"><path d="M12 7C6.48 7 2 9.24 2 12c0 2.24 2.94 4.13 7 4.77V20l4-4-4-4v2.73c-3.15-.56-5-1.9-5-2.73 0-1.06 3.04-3 8-3s8 1.94 8 3c0 .73-1.46 1.89-4 2.53v2.05c3.53-.77 6-2.53 6-4.58 0-2.76-4.48-5-10-5z" fill="#ffffff"/></g></g><g clip-path="url(#c2)"><rect x="527.25" y="191.05" width="154.50" height="154.50" fill="#6ed58b"/><path d="M539.70 191.05V345.55M527.25 203.50H681.75M554.00 191.05V345.55M527.25 217.80H681.75M568.31 191.05V345.55M527.25 232.11H681.75M582.61 191.05V345.55M527.25 246.41H681.75M596.92 191.05V345.55M527.25 260.72H681.75M611.22 191.05V345.55M527.25 275.02H681.75M625.53 191.05V345.55M527.25 289.33H681.75M639.83 191.05V345.55M527.25 303.63H681.75M654.14 191.05V345.55M527.25 317.94H681.75M668.45 191.05V345.55M527.25 332.25H681.75" stroke="#ffffff" stroke-opacity="0.33" stroke-width="0.9" fill="none"/><circle cx="604.50" cy="268.30" r="47.21" fill="none" stroke="#1a3a24" stroke-opacity="0.38" stroke-width="0.55"/><g transform="translate(559.70,223.50) scale(3.7338)"><path d="M12 7C6.48 7 2 9.24 2 12c0 2.24 2.94 4.13 7 4.77V20l4-4-4-4v2.73c-3.15-.56-5-1.9-5-2.73 0-1.06 3.04-3 8-3s8 1.94 8 3c0 .73-1.46 1.89-4 2.53v2.05c3.53-.77 6-2.53 6-4.58 0-2.76-4.48-5-10-5z" fill="#ffffff"/></g></g><g clip-path="url(#c3)"><rect x="633.75" y="191.45" width="154.50" height="154.50" fill="#6ed58b"/><path d="M646.20 191.45V345.95M633.75 203.90H788.25M660.50 191.45V345.95M633.75 218.20H788.25M674.81 191.45V345.95M633.75 232.51H788.25M689.11 191.45V345.95M633.75 246.81H788.25M703.42 191.45V345.95M633.75 261.12H788.25M717.72 191.45V345.95M633.75 275.42H788.25M732.03 191.45V345.95M633.75 289.73H788.25M746.33 191.45V345.95M633.75 304.03H788.25M760.64 191.45V345.95M633.75 318.34H788.25M774.95 191.45V345.95M633.75 332.65H788.25" stroke="#ffffff" stroke-opacity="0.33" stroke-width="0.9" fill="none"/><circle cx="711.00" cy="268.70" r="47.21" fill="none" stroke="#1a3a24" stroke-opacity="0.38" stroke-width="0.55"/><g transform="translate(666.20,223.89) scale(3.7338)"><path d="M12 7C6.48 7 2 9.24 2 12c0 2.24 2.94 4.13 7 4.77V20l4-4-4-4v2.73c-3.15-.56-5-1.9-5-2.73 0-1.06 3.04-3 8-3s8 1.94 8 3c0 .73-1.46 1.89-4 2.53v2.05c3.53-.77 6-2.53 6-4.58 0-2.76-4.48-5-10-5z" fill="#ffffff"/></g></g><g clip-path="url(#c4)"><rect x="421.35" y="330.45" width="154.50" height="154.50" fill="#6ed58b"/><path d="M433.80 330.45V484.95M421.35 342.90H575.85M448.10 330.45V484.95M421.35 357.20H575.85M462.41 330.45V484.95M421.35 371.51H575.85M476.71 330.45V484.95M421.35 385.81H575.85M491.02 330.45V484.95M421.35 400.12H575.85M505.32 330.45V484.95M421.35 414.42H575.85M519.63 330.45V484.95M421.35 428.73H575.85M533.93 330.45V484.95M421.35 443.03H575.85M548.24 330.45V484.95M421.35 457.34H575.85M562.55 330.45V484.95M421.35 471.65H575.85" stroke="#ffffff" stroke-opacity="0.33" stroke-width="0.9" fill="none"/><circle cx="498.60" cy="407.70" r="47.21" fill="none" stroke="#1a3a24" stroke-opacity="0.38" stroke-width="0.55"/><g transform="translate(453.80,362.89) scale(3.7338)"><path d="M12 7C6.48 7 2 9.24 2 12c0 2.24 2.94 4.13 7 4.77V20l4-4-4-4v2.73c-3.15-.56-5-1.9-5-2.73 0-1.06 3.04-3 8-3s8 1.94 8 3c0 .73-1.46 1.89-4 2.53v2.05c3.53-.77 6-2.53 6-4.58 0-2.76-4.48-5-10-5z" fill="#ffffff"/></g></g><g clip-path="url(#c5)"><rect x="553.10" y="335.20" width="124.10" height="124.10" fill="#6ed58b"/><path d="M563.79 335.20V459.30M553.10 345.89H677.20M575.28 335.20V459.30M553.10 357.38H677.20M586.77 335.20V459.30M553.10 368.87H677.20M598.26 335.20V459.30M553.10 380.36H677.20M609.75 335.20V459.30M553.10 391.85H677.20M621.24 335.20V459.30M553.10 403.34H677.20M632.73 335.20V459.30M553.10 414.83H677.20M644.22 335.20V459.30M553.10 426.32H677.20M655.71 335.20V459.30M553.10 437.81H677.20M667.20 335.20V459.30M553.10 449.30H677.20" stroke="#ffffff" stroke-opacity="0.33" stroke-width="0.9" fill="none"/><circle cx="615.15" cy="397.25" r="37.92" fill="none" stroke="#1a3a24" stroke-opacity="0.38" stroke-width="0.55"/><g transform="translate(579.16,361.26) scale(2.9991)"><path d="M12 7C6.48 7 2 9.24 2 12c0 2.24 2.94 4.13 7 4.77V20l4-4-4-4v2.73c-3.15-.56-5-1.9-5-2.73 0-1.06 3.04-3 8-3s8 1.94 8 3c0 .73-1.46 1.89-4 2.53v2.05c3.53-.77 6-2.53 6-4.58 0-2.76-4.48-5-10-5z" fill="#ffffff"/></g></g><g clip-path="url(#c6)"><rect x="405.80" y="426.20" width="249.00" height="249.00" fill="#6ed58b"/><path d="M426.20 426.20V675.20M405.80 446.60H654.80M449.26 426.20V675.20M405.80 469.66H654.80M472.32 426.20V675.20M405.80 492.72H654.80M495.37 426.20V675.20M405.80 515.77H654.80M518.43 426.20V675.20M405.80 538.83H654.80M541.48 426.20V675.20M405.80 561.88H654.80M564.54 426.20V675.20M405.80 584.94H654.80M587.59 426.20V675.20M405.80 607.99H654.80M610.65 426.20V675.20M405.80 631.05H654.80M633.70 426.20V675.20M405.80 654.10H654.80" stroke="#ffffff" stroke-opacity="0.33" stroke-width="0.9" fill="none"/><g transform="translate(458.09,478.49) scale(6.0175)"><path d="M12 7C6.48 7 2 9.24 2 12c0 2.24 2.94 4.13 7 4.77V20l4-4-4-4v2.73c-3.15-.56-5-1.9-5-2.73 0-1.06 3.04-3 8-3s8 1.94 8 3c0 .73-1.46 1.89-4 2.53v2.05c3.53-.77 6-2.53 6-4.58 0-2.76-4.48-5-10-5z" fill="#ffffff"/></g></g><rect x="687.2" y="398.4" width="54.6" height="54.2" rx="4" fill="#000" opacity="0.25" filter="url(#sh)"/><g clip-path="url(#c7)"><rect x="674.15" y="384.65" width="80.70" height="80.70" fill="#6ed58b"/><path d="M680.43 384.65V465.35M674.15 390.93H754.85M687.90 384.65V465.35M674.15 398.40H754.85M695.37 384.65V465.35M674.15 405.87H754.85M702.84 384.65V465.35M674.15 413.34H754.85M710.32 384.65V465.35M674.15 420.82H754.85M717.79 384.65V465.35M674.15 428.29H754.85M725.26 384.65V465.35M674.15 435.76H754.85M732.73 384.65V465.35M674.15 443.23H754.85M740.20 384.65V465.35M674.15 450.70H754.85M747.68 384.65V465.35M674.15 458.18H754.85" stroke="#ffffff" stroke-opacity="0.33" stroke-width="0.9" fill="none"/><g transform="translate(691.10,401.60) scale(1.9502)"><path d="M12 7C6.48 7 2 9.24 2 12c0 2.24 2.94 4.13 7 4.77V20l4-4-4-4v2.73c-3.15-.56-5-1.9-5-2.73 0-1.06 3.04-3 8-3s8 1.94 8 3c0 .73-1.46 1.89-4 2.53v2.05c3.53-.77 6-2.53 6-4.58 0-2.76-4.48-5-10-5z" fill="#ffffff"/></g></g><circle cx="786.5" cy="425.6" r="31.4" fill="#000" opacity="0.25" filter="url(#sh)"/><g clip-path="url(#c8)"><rect x="738.70" y="377.20" width="95.60" height="95.60" fill="#6ed58b"/><path d="M746.93 377.20V472.80M738.70 385.43H834.30M755.78 377.20V472.80M738.70 394.28H834.30M764.64 377.20V472.80M738.70 403.14H834.30M773.49 377.20V472.80M738.70 411.99H834.30M782.34 377.20V472.80M738.70 420.84H834.30M791.19 377.20V472.80M738.70 429.69H834.30M800.04 377.20V472.80M738.70 438.54H834.30M808.90 377.20V472.80M738.70 447.40H834.30M817.75 377.20V472.80M738.70 456.25H834.30M826.60 377.20V472.80M738.70 465.10H834.30" stroke="#ffffff" stroke-opacity="0.33" stroke-width="0.9" fill="none"/><g transform="translate(758.78,397.28) scale(2.3103)"><path d="M12 7C6.48 7 2 9.24 2 12c0 2.24 2.94 4.13 7 4.77V20l4-4-4-4v2.73c-3.15-.56-5-1.9-5-2.73 0-1.06 3.04-3 8-3s8 1.94 8 3c0 .73-1.46 1.89-4 2.53v2.05c3.53-.77 6-2.53 6-4.58 0-2.76-4.48-5-10-5z" fill="#ffffff"/></g></g><text x="497.90" y="329.2" text-anchor="middle" font-family="Liberation Sans" font-size="9.6" fill="#222222">Circle</text><text x="603.90" y="329.2" text-anchor="middle" font-family="Liberation Sans" font-size="9.6" fill="#222222">Squircle</text><text x="710.40" y="328.9" text-anchor="middle" font-family="Liberation Sans" font-size="9.6" fill="#222222">Rounded Square</text><text x="498.00" y="467.8" text-anchor="middle" font-family="Liberation Sans" font-size="9.6" fill="#222222">Square</text><text x="614.55" y="467.8" text-anchor="middle" font-family="Liberation Sans" font-size="9.6" fill="#222222">Full Bleed Layers</text><text x="713.90" y="468.0" text-anchor="middle" font-family="Liberation Sans" font-size="9.6" fill="#222222">Legacy Icon</text><text x="785.90" y="468.0" text-anchor="middle" font-family="Liberation Sans" font-size="9.6" fill="#222222">Round Icon</text><rect x="851.3" y="215" width="6.2" height="166.3" rx="3.1" fill="#9a9a9a" opacity="0.8"/></svg>
</body></html>
